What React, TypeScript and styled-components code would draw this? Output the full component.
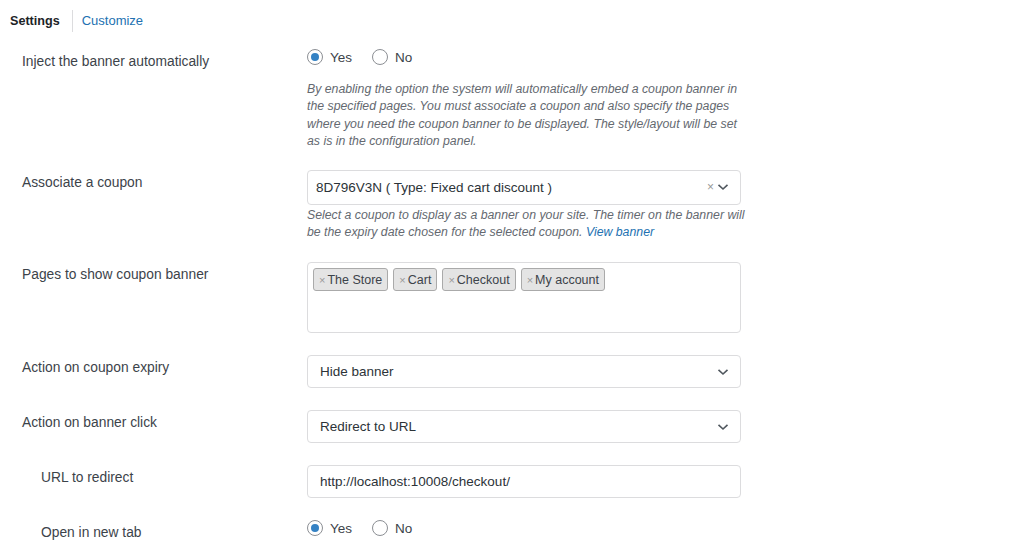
import React from "react";
import styled, { createGlobalStyle } from "styled-components";

const Global = createGlobalStyle`
  html, body { margin: 0; padding: 0; background: #fff; }
  body { font-family: "Liberation Sans", Arial, sans-serif; color: #3c434a; }
`;

const Page = styled.div`
  width: 1024px;
  height: 555px;
  overflow: hidden;
  background: #fff;
`;

const Tabs = styled.div`
  display: flex;
  align-items: center;
  height: 22px;
  margin-top: 10px;
  padding-left: 10px;
`;

const Tab = styled.a<{ $active?: boolean }>`
  font-size: ${(p) => (p.$active ? "12.6px" : "13px")};
  font-weight: ${(p) => (p.$active ? 700 : 400)};
  color: ${(p) => (p.$active ? "#1d2327" : "#2271b1")};
  text-decoration: none;
  line-height: 22px;
`;

const Divider = styled.span`
  width: 1px;
  align-self: stretch;
  background: #dcdcde;
  margin: 0 9px 0 12px;
`;

const Form = styled.div`
  display: grid;
  grid-template-columns: 285px 434px;
  padding-left: 22px;
  margin-top: 17px;
  row-gap: 22px;
`;

const Label = styled.div<{ $indent?: boolean }>`
  font-size: 13.8px;
  line-height: 20px;
  padding-top: 3px;
  padding-left: ${(p) => (p.$indent ? "19px" : "0")};
  color: #3c434a;
`;

const Field = styled.div`
  display: flex;
  flex-direction: column;
`;

const Radios = styled.div`
  display: flex;
  align-items: center;
  height: 16px;
  gap: 20px;
`;

const RadioOpt = styled.label`
  display: flex;
  align-items: center;
  gap: 7px;
  font-size: 13.5px;
  color: #3c434a;
`;

const RadioCircle = styled.span<{ $on?: boolean }>`
  width: 14px;
  height: 14px;
  border-radius: 50%;
  border: 1px solid #8c8f94;
  background: #fff;
  display: flex;
  align-items: center;
  justify-content: center;
  &::after {
    content: "";
    display: ${(p) => (p.$on ? "block" : "none")};
    width: 8px;
    height: 8px;
    border-radius: 50%;
    background: #3582c4;
  }
`;

const Desc = styled.p<{ $mt: number; $mb: number }>`
  margin: ${(p) => p.$mt}px 0 ${(p) => p.$mb}px;
  font-size: 12.3px;
  font-style: italic;
  line-height: 17.4px;
  color: #646970;
  white-space: nowrap;
  a { color: #2271b1; text-decoration: none; }
`;

const Box = styled.div<{ $h?: number; $pl?: number }>`
  box-sizing: border-box;
  height: ${(p) => p.$h ?? 33}px;
  border: 1px solid #dcdcde;
  border-radius: 4px;
  background: #fff;
  display: flex;
  align-items: ${(p) => (p.$h && p.$h > 40 ? "flex-start" : "center")};
  padding: 0 7px 0 ${(p) => p.$pl ?? 12}px;
  font-size: 13.5px;
  color: #2c3338;
`;

const BoxText = styled.span`
  flex: 1;
`;

const Clear = styled.span`
  font-size: 12px;
  color: #999;
  margin-right: 3px;
`;

const Chevron = () => (
  <svg width="12" height="8" viewBox="0 0 12 8" style={{ marginRight: 4 }}>
    <path d="M1.5 1.8 L6 6 L10.5 1.8" fill="none" stroke="#50575e" strokeWidth="1.6" />
  </svg>
);

const TagBox = styled(Box)`
  padding: 5px 5px;
  gap: 5px;
`;

const Tag = styled.span`
  box-sizing: border-box;
  height: 23px;
  display: inline-flex;
  align-items: center;
  padding: 0 5px 0 5px;
  background: #e4e4e4;
  border: 1px solid #aaa;
  border-radius: 3px;
  font-size: 12.5px;
  color: #3c434a;
`;

const TagX = styled.span`
  color: #999;
  font-size: 11px;
  margin-right: 2px;
`;

const Input = styled.div`
  box-sizing: border-box;
  height: 33px;
  border: 1px solid #dcdcde;
  border-radius: 4px;
  display: flex;
  align-items: center;
  padding: 0 12px;
  font-size: 13.5px;
  color: #2c3338;
`;

const Radio = ({ on, label }: { on?: boolean; label: string }) => (
  <RadioOpt>
    <RadioCircle $on={on} />
    {label}
  </RadioOpt>
);

const Select = ({ text, clear }: { text: string; clear?: boolean }) => (
  <Box $h={clear ? 35 : 33} $pl={clear ? 8 : 12}>
    <BoxText>{text}</BoxText>
    {clear && <Clear>×</Clear>}
    <Chevron />
  </Box>
);

export default function App() {
  return (
    <Page>
      <Global />
      <Tabs>
        <Tab $active>Settings</Tab>
        <Divider />
        <Tab>Customize</Tab>
      </Tabs>
      <Form>
        <Label>Inject the banner automatically</Label>
        <Field>
          <Radios>
            <Radio on label="Yes" />
            <Radio label="No" />
          </Radios>
          <Desc $mt={16} $mb={-3}>
            By enabling the option the system will automatically embed a coupon banner in
            <br />
            the specified pages. You must associate a coupon and also specify the pages
            <br />
            where you need the coupon banner to be displayed. The style/layout will be set
            <br />
            as is in the configuration panel.
          </Desc>
        </Field>

        <Label>Associate a coupon</Label>
        <Field>
          <Select text="8D796V3N ( Type: Fixed cart discount )" clear />
          <Desc $mt={2} $mb={-1}>
            Select a coupon to display as a banner on your site. The timer on the banner will
            <br />
            be the expiry date chosen for the selected coupon. <a href="#">View banner</a>
          </Desc>
        </Field>

        <Label>Pages to show coupon banner</Label>
        <Field>
          <TagBox $h={71}>
            {["The Store", "Cart", "Checkout", "My account"].map((t) => (
              <Tag key={t}>
                <TagX>×</TagX>
                {t}
              </Tag>
            ))}
          </TagBox>
        </Field>

        <Label>Action on coupon expiry</Label>
        <Field>
          <Select text="Hide banner" />
        </Field>

        <Label>Action on banner click</Label>
        <Field>
          <Select text="Redirect to URL" />
        </Field>

        <Label $indent>URL to redirect</Label>
        <Field>
          <Input>http://localhost:10008/checkout/</Input>
        </Field>

        <Label $indent>Open in new tab</Label>
        <Field>
          <Radios>
            <Radio on label="Yes" />
            <Radio label="No" />
          </Radios>
        </Field>
      </Form>
    </Page>
  );
}
